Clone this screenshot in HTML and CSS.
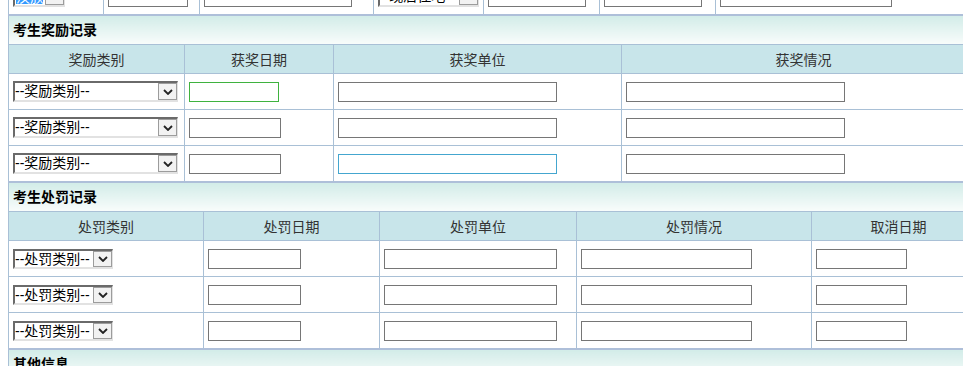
FILE: index.html
```html
<!DOCTYPE html>
<html lang="zh-CN">
<head>
    <meta charset="UTF-8">
    <title>考生信息登记</title>
    <link rel="stylesheet" href="styles.css">
</head>
<body>
    <div class="page">
        <!-- 基本信息（已滚动到末行） -->
        <table class="grid">
            <colgroup>
                <col style="width:95px"><col style="width:96px"><col style="width:174px"><col style="width:110px">
                <col style="width:116px"><col style="width:116px"><col style="width:270px">
            </colgroup>
            <tr class="row">
                <td><span class="combo tiny"><select class="picked"><option>汉族</option></select><span class="drop"><svg width="10" height="6" viewBox="0 0 10 6"><path d="M1 1l4 4 4-4" fill="none" stroke="#222" stroke-width="1.8"/></svg></span></span></td>
                <td><input type="text" class="txt w80"></td>
                <td><input type="text" class="txt w148"></td>
                <td><span class="combo mid"><select><option>--现居住地--</option></select><span class="drop"><svg width="10" height="6" viewBox="0 0 10 6"><path d="M1 1l4 4 4-4" fill="none" stroke="#222" stroke-width="1.8"/></svg></span></span></td>
                <td><input type="text" class="txt w98"></td>
                <td><input type="text" class="txt w98"></td>
                <td><input type="text" class="txt w172"></td>
            </tr>
        </table>

        <!-- 考生奖励记录 -->
        <table class="grid">
            <colgroup>
                <col style="width:176px"><col style="width:149px"><col style="width:288px"><col style="width:364px">
            </colgroup>
            <tr><td colspan="4" class="section">考生奖励记录</td></tr>
            <tr class="head">
                <th>奖励类别</th><th>获奖日期</th><th>获奖单位</th><th>获奖情况</th>
            </tr>
            <tr class="row">
                <td><span class="combo wide"><select><option>--奖励类别--</option></select><span class="drop"><svg width="10" height="6" viewBox="0 0 10 6"><path d="M1 1l4 4 4-4" fill="none" stroke="#222" stroke-width="1.8"/></svg></span></span></td>
                <td><input type="text" class="txt w90 ok"></td>
                <td><input type="text" class="txt w219"></td>
                <td><input type="text" class="txt w219"></td>
            </tr>
            <tr class="row">
                <td><span class="combo wide"><select><option>--奖励类别--</option></select><span class="drop"><svg width="10" height="6" viewBox="0 0 10 6"><path d="M1 1l4 4 4-4" fill="none" stroke="#222" stroke-width="1.8"/></svg></span></span></td>
                <td><input type="text" class="txt w92"></td>
                <td><input type="text" class="txt w219"></td>
                <td><input type="text" class="txt w219"></td>
            </tr>
            <tr class="row">
                <td><span class="combo wide"><select><option>--奖励类别--</option></select><span class="drop"><svg width="10" height="6" viewBox="0 0 10 6"><path d="M1 1l4 4 4-4" fill="none" stroke="#222" stroke-width="1.8"/></svg></span></span></td>
                <td><input type="text" class="txt w92"></td>
                <td><input type="text" class="txt w219 hover"></td>
                <td><input type="text" class="txt w219"></td>
            </tr>
        </table>

        <!-- 考生处罚记录 -->
        <table class="grid">
            <colgroup>
                <col style="width:195px"><col style="width:176px"><col style="width:197px"><col style="width:235px"><col style="width:174px">
            </colgroup>
            <tr><td colspan="5" class="section">考生处罚记录</td></tr>
            <tr class="head">
                <th>处罚类别</th><th>处罚日期</th><th>处罚单位</th><th>处罚情况</th><th>取消日期</th>
            </tr>
            <tr class="row">
                <td><span class="combo short"><select><option>--处罚类别--</option></select><span class="drop"><svg width="10" height="6" viewBox="0 0 10 6"><path d="M1 1l4 4 4-4" fill="none" stroke="#222" stroke-width="1.8"/></svg></span></span></td>
                <td><input type="text" class="txt w93"></td>
                <td><input type="text" class="txt w173"></td>
                <td><input type="text" class="txt w171"></td>
                <td><input type="text" class="txt w91"></td>
            </tr>
            <tr class="row">
                <td><span class="combo short"><select><option>--处罚类别--</option></select><span class="drop"><svg width="10" height="6" viewBox="0 0 10 6"><path d="M1 1l4 4 4-4" fill="none" stroke="#222" stroke-width="1.8"/></svg></span></span></td>
                <td><input type="text" class="txt w93"></td>
                <td><input type="text" class="txt w173"></td>
                <td><input type="text" class="txt w171"></td>
                <td><input type="text" class="txt w91"></td>
            </tr>
            <tr class="row">
                <td><span class="combo short"><select><option>--处罚类别--</option></select><span class="drop"><svg width="10" height="6" viewBox="0 0 10 6"><path d="M1 1l4 4 4-4" fill="none" stroke="#222" stroke-width="1.8"/></svg></span></span></td>
                <td><input type="text" class="txt w93"></td>
                <td><input type="text" class="txt w173"></td>
                <td><input type="text" class="txt w171"></td>
                <td><input type="text" class="txt w91"></td>
            </tr>
        </table>

        <!-- 其他信息 -->
        <table class="grid">
            <colgroup><col style="width:977px"></colgroup>
            <tr><td class="section">其他信息</td></tr>
            <tr class="row"><td><input type="text" class="txt w219"></td></tr>
        </table>
    </div>
</body>
</html>
```

FILE: styles.css
```css
/* 页面与表格 */
body {
    margin: 0 8px;
    background-color: #ffffff;
    color: #000000;
    font-family: "Liberation Sans", "Noto Sans CJK SC", sans-serif;
    font-size: 14px;
    overflow: hidden;
}
.page {
    width: 977px;
    margin-top: -21px;
}
.grid {
    width: 977px;
    table-layout: fixed;
    border-collapse: collapse;
    border-left: 1px solid #a9c0d6;
}
.grid td, .grid th {
    border-right: 1px solid #a9c0d6;
    border-bottom: 1px solid #a9c0d6;
    padding: 0 0 0 4px;
    text-align: left;
    vertical-align: middle;
}
.grid tr:last-child td {
    border-bottom: 0;
}
.section {
    height: 28px;
    border-top: 2px solid #aebfd9;
    background: linear-gradient(#d2ece8, #f8fcfb);
    font-weight: bold;
    font-size: 14px;
    line-height: 28px;
}
.head th {
    height: 28px;
    background-color: #c8e5ea;
    font-weight: normal;
    font-size: 14px;
    color: #333333;
    text-align: center;
    padding: 0;
}
.row td {
    height: 35px;
    line-height: 0;
}

/* 输入框 */
.txt {
    box-sizing: border-box;
    height: 20px;
    border: 1px solid #767676;
    background: #ffffff;
    padding: 0 2px;
    margin: 0;
    vertical-align: middle;
}
.txt.ok { border-color: #3fb23f; }
.txt.hover { border-color: #44a6cf; }
.w80 { width: 80px; }
.w90 { width: 90px; }
.w91 { width: 91px; }
.w92 { width: 92px; }
.w93 { width: 93px; }
.w98 { width: 98px; }
.w148 { width: 148px; }
.w171 { width: 171px; }
.w172 { width: 172px; }
.w173 { width: 173px; }
.w219 { width: 219px; }

/* 下拉框（旧式） */
.combo {
    display: inline-flex;
    align-items: stretch;
    box-sizing: border-box;
    height: 21px;
    border-top: 2px solid #6a6a6a;
    border-left: 2px solid #6a6a6a;
    border-bottom: 2px solid #e2e2e2;
    border-right: 1px solid #e2e2e2;
    background: #ffffff;
    vertical-align: middle;
}
.combo select {
    flex: 1;
    min-width: 0;
    appearance: none;
    -webkit-appearance: none;
    border: 0;
    margin: 0;
    padding: 0;
    background: transparent;
    font-family: "Liberation Sans", "Noto Sans CJK SC", sans-serif;
    font-size: 14px;
    line-height: 17px;
    color: #000000;
    outline: none;
}
.combo select.picked {
    background: #3399ff;
    color: #ffffff;
    margin: 1px 2px 1px 1px;
}
.drop {
    display: flex;
    align-items: center;
    justify-content: center;
    width: 17px;
    border: 1px solid #9c9c9c;
    background: #f2f2f2;
}
.combo.wide { width: 165px; }
.combo.short { width: 100px; height: 20px; }
.combo.tiny { width: 52px; }
.combo.mid { width: 101px; }
```
